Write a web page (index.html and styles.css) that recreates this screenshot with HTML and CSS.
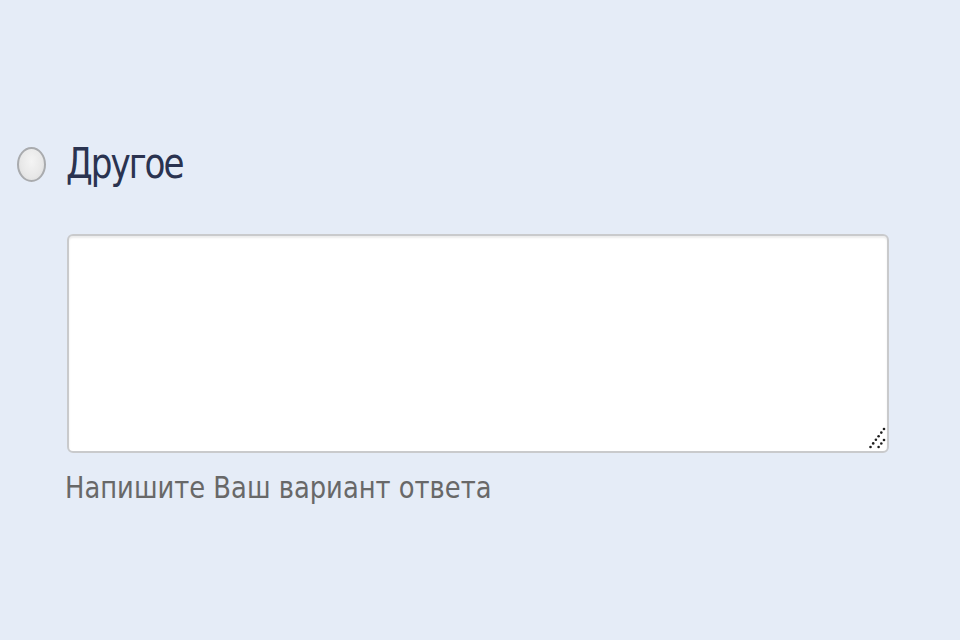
FILE: index.html
```html
<!DOCTYPE html>
<html lang="ru">
<head>
<meta charset="utf-8">
<link rel="stylesheet" href="styles.css">
</head>
<body>
<div class="page">
  <label class="option">
    <span class="radio"></span>
    <span class="label-text">Другое</span>
  </label>
  <div class="answer">
    <div class="textarea">
      <svg class="grip" width="20" height="22" viewBox="0 0 20 22">
        <g fill="#1e1e1e">
          <circle cx="18" cy="2" r="1.3"/><circle cx="15.3" cy="5.6" r="1.3"/><circle cx="12.6" cy="9.2" r="1.3"/><circle cx="9.9" cy="12.8" r="1.3"/><circle cx="7.2" cy="16.4" r="1.3"/><circle cx="4.5" cy="20" r="1.3"/>
          <circle cx="18" cy="13" r="1.3"/><circle cx="15.3" cy="16.5" r="1.3"/><circle cx="12.6" cy="20" r="1.3"/>
        </g>
      </svg>
    </div>
    <div class="hint">Напишите Ваш вариант ответа</div>
  </div>
</div>
</body>
</html>
```
FILE: styles.css
```css
html, body {
  margin: 0;
  padding: 0;
  background: #e5ecf7;
}
.page {
  width: 960px;
  height: 640px;
  box-sizing: border-box;
  padding-top: 146px;
  padding-left: 17px;
  font-family: "DejaVu Sans Condensed", "DejaVu Sans", sans-serif;
}
.option {
  display: flex;
  align-items: center;
  gap: 20px;
  height: 36px;
}
.radio {
  width: 29px;
  height: 35px;
  box-sizing: border-box;
  border-radius: 50%;
  border: 2px solid #a9abae;
  background: radial-gradient(ellipse at 50% 40%, #f4f4f4 0%, #e8e8e8 60%, #d6d6d6 100%);
  flex: none;
}
.label-text {
  font-size: 38px;
  color: #2a3350;
  letter-spacing: -2px;
  line-height: 36px;
  display: inline-block;
  transform: scaleY(1.1);
}
.answer {
  margin-top: 52px;
  margin-left: 50px;
  width: 822px;
}
.textarea {
  position: relative;
  height: 219px;
  box-sizing: border-box;
  background: #fff;
  border: 2px solid #c9cacc;
  border-radius: 6px;
  box-shadow: inset 0 2px 2px rgba(0,0,0,0.08);
}
.grip {
  position: absolute;
  right: 1px;
  bottom: 2px;
}
.hint {
  margin-top: 16px;
  margin-left: -2px;
  font-size: 28.7px;
  color: #686868;
  line-height: 34px;
  letter-spacing: 0;
  transform: scaleY(1.08);
  transform-origin: left top;
}
```
